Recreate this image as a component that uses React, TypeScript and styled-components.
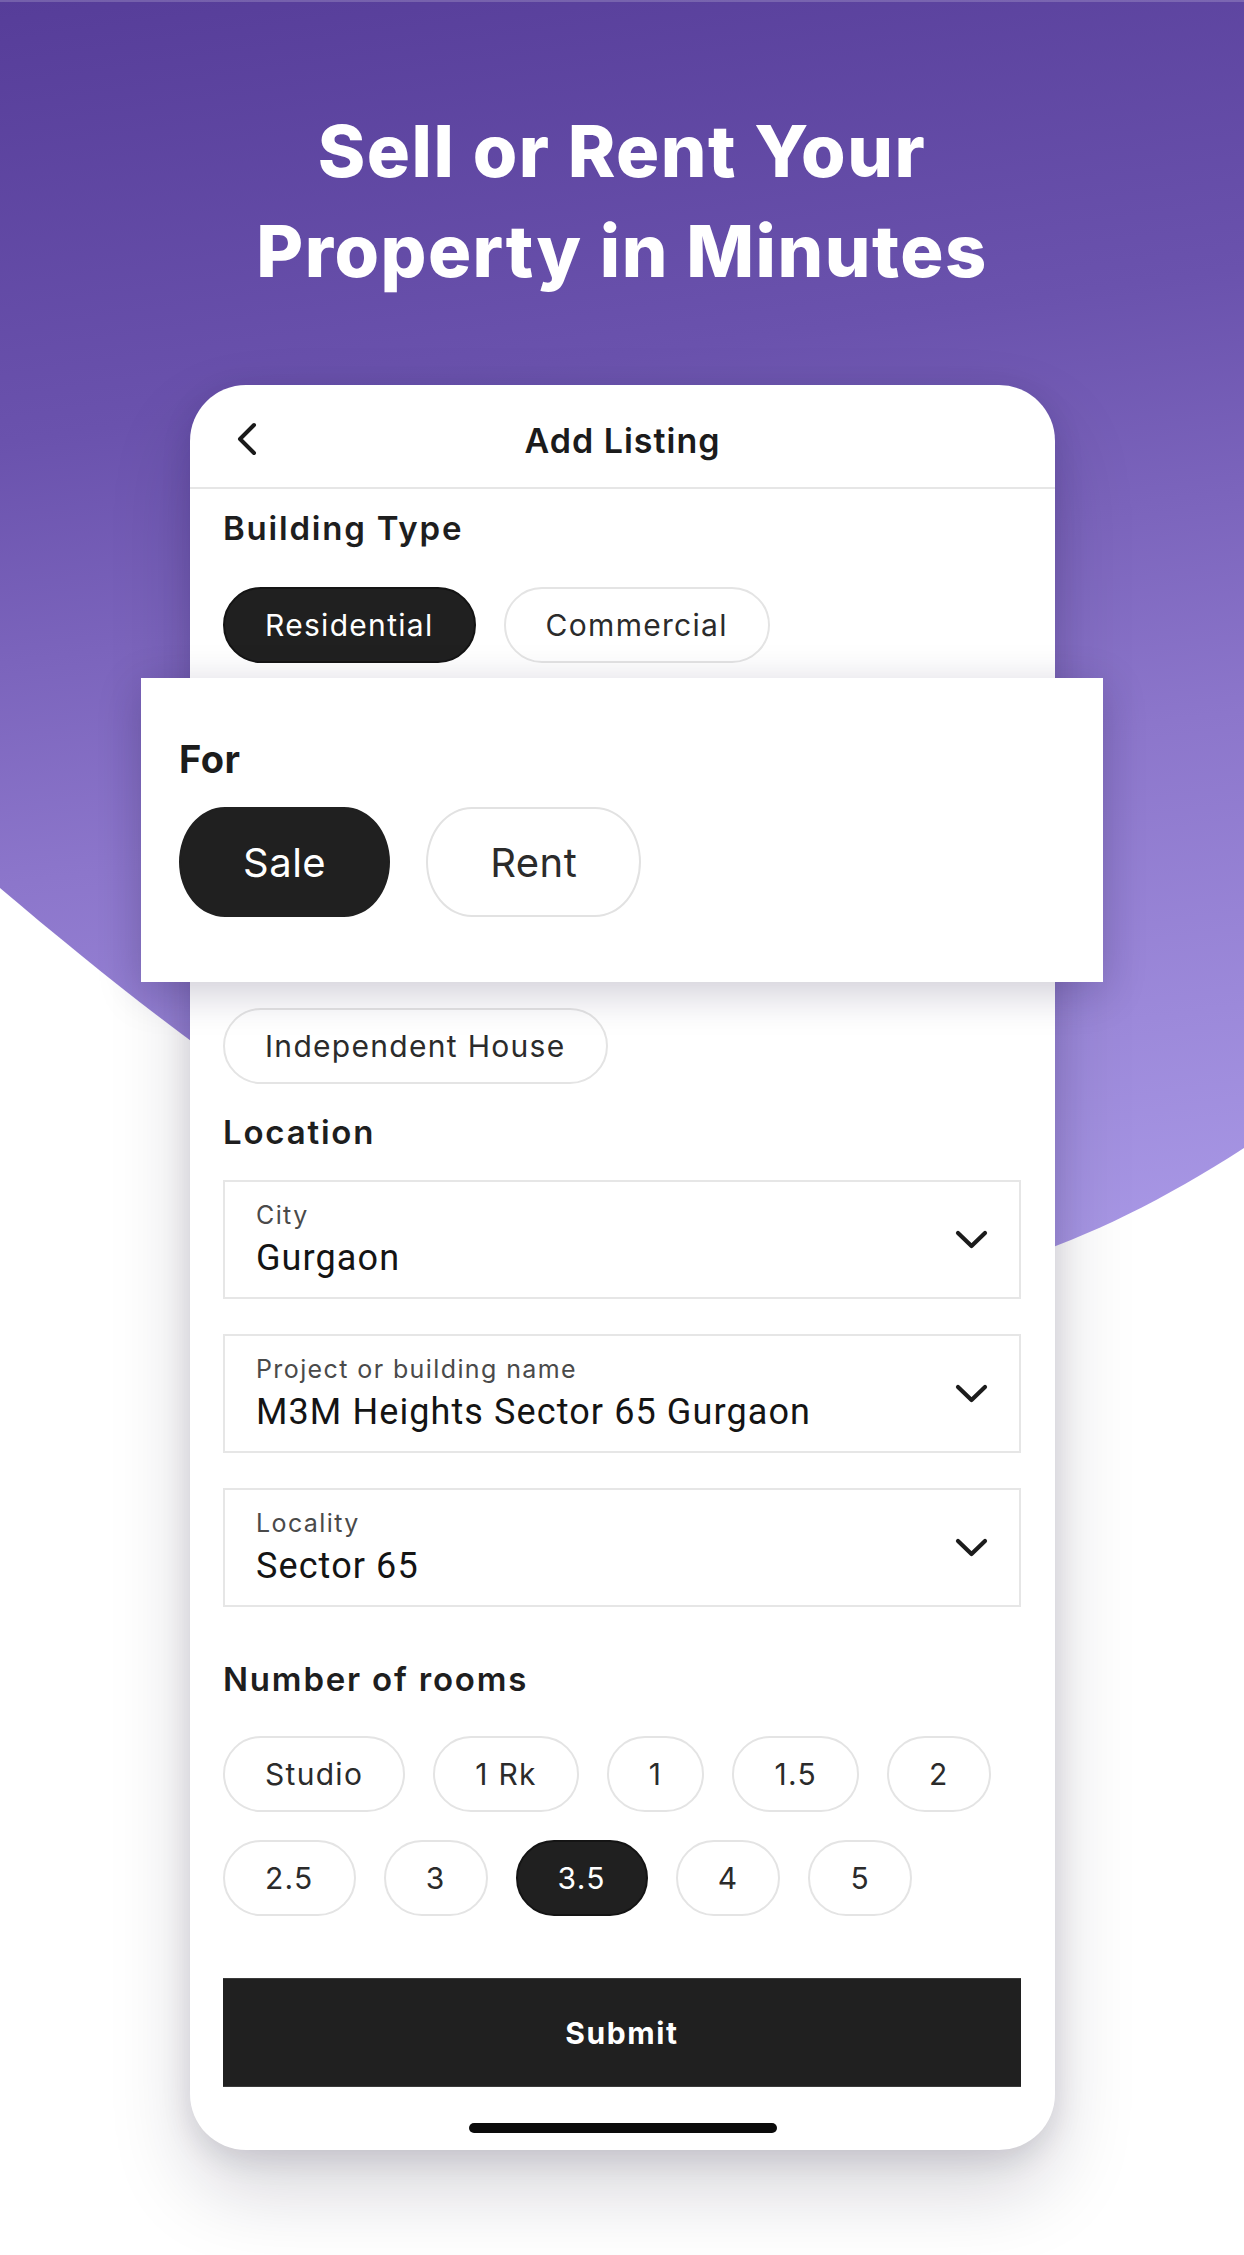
import React from 'react';
import styled, { createGlobalStyle } from 'styled-components';

const GlobalStyle = createGlobalStyle`
  html, body {
    margin: 0;
    padding: 0;
    background: #fff;
  }
  body {
    font-family: Inter, "Open Sans", sans-serif;
    -webkit-font-smoothing: antialiased;
  }
  * {
    box-sizing: border-box;
  }
`;

const Page = styled.div`
  position: relative;
  width: 1244px;
  height: 2255px;
  overflow: hidden;
  background: #fff;
`;

// purple wash behind the phone, cut by the big curve
const Backdrop = styled.div`
  position: absolute;
  top: 0;
  left: 0;
  width: 1244px;
  height: 1300px;
  background: linear-gradient(172deg, #563d99 0%, #6a52ad 30%, #8c76cb 60%, #ac9ce9 100%);
  box-shadow: inset 0 2px 0 rgba(255, 255, 255, 0.18);
  clip-path: path('M0,0 H1244 V1148 C794,1440 450,1270 0,888 Z');
`;

const Headline = styled.h1`
  position: relative;
  margin: 0;
  padding-top: 101px;
  text-align: center;
  color: #fff;
  font-family: Inter, sans-serif;
  font-weight: 800;
  font-size: 72px;
  line-height: 100px;
  letter-spacing: 1.5px;
`;

const Stage = styled.div`
  position: relative;
  width: 865px;
  margin: 84px 0 0 190px;
`;

const Phone = styled.div`
  height: 1765px;
  background: #fff;
  border-radius: 56px;
  box-shadow: 0 40px 80px rgba(20, 10, 40, 0.17), 0 8px 30px rgba(20, 10, 40, 0.12);
  display: flex;
  flex-direction: column;
`;

const TopBar = styled.div`
  height: 104px;
  flex-shrink: 0;
  border-bottom: 2px solid #e6e6e6;
  display: grid;
  grid-template-columns: 1fr auto 1fr;
  align-items: center;
  padding: 6px 45px 0;
`;

const BackButton = styled.div`
  display: flex;
  align-items: center;
`;

const ScreenTitle = styled.div`
  font-size: 34px;
  font-weight: 600;
  line-height: 40px;
  letter-spacing: 1px;
  color: #1b1b1b;
  padding-top: 4px;
`;

const Form = styled.div`
  display: flex;
  flex-direction: column;
  padding: 0 34px 0 33px;
`;

// rows that sit under the "For" callout: kept for the layout, not painted
const Covered = styled.div`
  display: flex;
  flex-direction: column;
  visibility: hidden;
`;

const SectionTitle = styled.h2<{ $gap: number }>`
  margin: ${(p) => p.$gap}px 0 0;
  font-size: 33px;
  font-weight: 600;
  line-height: 40px;
  letter-spacing: 1.8px;
  color: #1e1e1e;
`;

const ChipRow = styled.div<{ $gap: number }>`
  display: flex;
  flex-wrap: wrap;
  gap: 28px;
  margin-top: ${(p) => p.$gap}px;
`;

const Chip = styled.div<{ $active?: boolean }>`
  height: 76px;
  padding: 0 40px;
  display: inline-flex;
  align-items: center;
  justify-content: center;
  border-radius: 38px;
  border: 2px solid ${(p) => (p.$active ? '#141414' : '#e4e4e4')};
  background: ${(p) => (p.$active ? '#202020' : '#fff')};
  color: ${(p) => (p.$active ? '#fff' : '#2b2b2b')};
  font-size: 30px;
  font-weight: 400;
  letter-spacing: 1.3px;
  white-space: nowrap;
`;

// zoomed-in copy of the "For" block laid over the phone
const Callout = styled.div`
  position: absolute;
  top: 293px;
  left: -49px;
  width: 962px;
  height: 304px;
  background: #fff;
  box-shadow: 0 10px 40px rgba(25, 15, 60, 0.22);
  padding: 57px 38px 0;
  z-index: 2;
`;

const CalloutTitle = styled.div`
  font-size: 38px;
  font-weight: 700;
  line-height: 48px;
  letter-spacing: 0.5px;
  color: #1c1c1c;
`;

const BigChipRow = styled.div`
  display: flex;
  gap: 36px;
  margin-top: 24px;
`;

const BigChip = styled.div<{ $active?: boolean }>`
  height: 110px;
  padding: 0 62px;
  display: inline-flex;
  align-items: center;
  border-radius: 46px / 55px;
  border: 2px solid ${(p) => (p.$active ? '#202020' : '#e2e2e2')};
  background: ${(p) => (p.$active ? '#202020' : '#fff')};
  color: ${(p) => (p.$active ? '#fff' : '#2b2b2b')};
  font-size: 40px;
  font-weight: 400;
  letter-spacing: 0.5px;
`;

const Field = styled.div<{ $gap: number }>`
  margin-top: ${(p) => p.$gap}px;
  height: 119px;
  border: 2px solid #e6e6e6;
  display: flex;
  align-items: center;
  justify-content: space-between;
  padding: 0 31px;
`;

const FieldText = styled.div`
  display: flex;
  flex-direction: column;
  gap: 7px;
`;

const FieldLabel = styled.div`
  font-size: 25px;
  line-height: 30px;
  letter-spacing: 1.4px;
  color: #4a4a4a;
`;

const FieldValue = styled.div`
  font-family: Roboto, "Liberation Sans", sans-serif;
  font-size: 36px;
  line-height: 42px;
  letter-spacing: 1.1px;
  color: #141414;
`;

const SubmitButton = styled.div`
  margin-top: 62px;
  height: 109px;
  background: #202020;
  border-top: 1px solid #3a3a3a;
  border-bottom: 1px solid #3a3a3a;
  display: flex;
  align-items: center;
  justify-content: center;
  color: #fff;
  font-size: 30px;
  font-weight: 700;
  letter-spacing: 1.6px;
`;

const HomeBar = styled.div`
  margin: 36px auto 0;
  width: 308px;
  height: 10px;
  border-radius: 5px;
  background: #0b0b0b;
`;

const BackChevron = () => (
  <svg width="24" height="34" viewBox="0 0 24 34">
    <path d="M19 3 L5 17 L19 31" stroke="#1a1a1a" strokeWidth="4" fill="none" strokeLinecap="round" strokeLinejoin="round" />
  </svg>
);

const DownChevron = () => (
  <svg width="33" height="19" viewBox="0 0 33 19">
    <path d="M3 3 L16.5 16 L30 3" stroke="#1c1c1c" strokeWidth="4.2" fill="none" strokeLinecap="round" strokeLinejoin="round" />
  </svg>
);

const fields = [
  { label: 'City', value: 'Gurgaon' },
  { label: 'Project or building name', value: 'M3M Heights Sector 65 Gurgaon' },
  { label: 'Locality', value: 'Sector 65' },
];

const rooms = ['Studio', '1 Rk', '1', '1.5', '2', '2.5', '3', '3.5', '4', '5'];

const App = () => {
  return (
    <Page>
      <GlobalStyle />
      <Backdrop />
      <Headline>
        Sell or Rent Your
        <br />
        Property in Minutes
      </Headline>

      <Stage>
        <Phone>
          <TopBar>
            <BackButton>
              <BackChevron />
            </BackButton>
            <ScreenTitle>Add Listing</ScreenTitle>
            <div />
          </TopBar>

          <Form>
            <SectionTitle $gap={19}>Building Type</SectionTitle>
            <ChipRow $gap={39}>
              <Chip $active>Residential</Chip>
              <Chip>Commercial</Chip>
            </ChipRow>

            <Covered aria-hidden>
              <SectionTitle $gap={20}>For</SectionTitle>
              <ChipRow $gap={16}>
                <Chip $active>Sale</Chip>
                <Chip>Rent</Chip>
              </ChipRow>
              <SectionTitle $gap={20}>Property Type</SectionTitle>
              <ChipRow $gap={29}>
                <Chip>Apartment</Chip>
                <Chip>Builder Floor</Chip>
              </ChipRow>
            </Covered>
            <ChipRow $gap={28}>
              <Chip>Independent House</Chip>
            </ChipRow>

            <SectionTitle $gap={28}>Location</SectionTitle>
            {fields.map((f, i) => (
              <Field key={f.label} $gap={i === 0 ? 28 : 35}>
                <FieldText>
                  <FieldLabel>{f.label}</FieldLabel>
                  <FieldValue>{f.value}</FieldValue>
                </FieldText>
                <DownChevron />
              </Field>
            ))}

            <SectionTitle $gap={52}>Number of rooms</SectionTitle>
            <ChipRow $gap={37}>
              {rooms.map((r) => (
                <Chip key={r} $active={r === '3.5'}>
                  {r}
                </Chip>
              ))}
            </ChipRow>

            <SubmitButton>Submit</SubmitButton>
          </Form>
          <HomeBar />
        </Phone>

        <Callout>
          <CalloutTitle>For</CalloutTitle>
          <BigChipRow>
            <BigChip $active>Sale</BigChip>
            <BigChip>Rent</BigChip>
          </BigChipRow>
        </Callout>
      </Stage>
    </Page>
  );
};

export default App;
